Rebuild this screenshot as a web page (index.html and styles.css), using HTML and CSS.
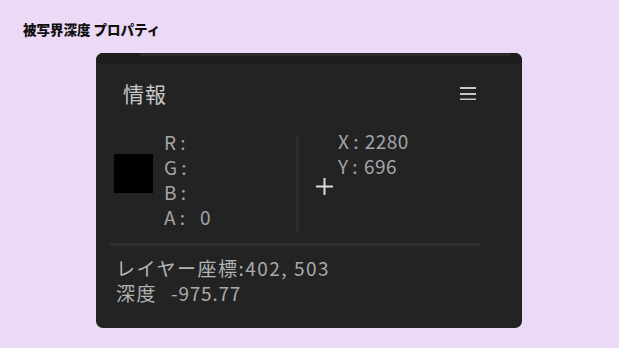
FILE: index.html
```html
<!DOCTYPE html>
<html>
  <head>
    <title>被写界深度 プロパティ</title>
    <link rel="stylesheet" href="styles.css">
  </head>
  <body>
    <h1 class="title">被写界深度 プロパティ</h1>

    <div class="panel">
      <div class="tabbar"><div class="tabstrip"></div></div>

      <div class="header">
        <span class="header-title">情報</span>
        <svg class="menu" width="16" height="14" viewBox="0 0 16 14">
          <rect x="0" y="1" width="16" height="2" fill="#c8c8c8"/>
          <rect x="0" y="7" width="16" height="2" fill="#c8c8c8"/>
          <rect x="0" y="12.5" width="16" height="1.5" fill="#c8c8c8"/>
        </svg>
      </div>

      <div class="info">
        <div class="swatch"></div>
        <ul class="rows rgba">
          <li>R :</li>
          <li>G :</li>
          <li>B :</li>
          <li>A :<span class="val">0</span></li>
        </ul>
        <div class="divider"></div>
        <svg class="cross" width="17" height="17" viewBox="0 0 17 17">
          <rect x="7.5" y="0" width="2" height="17" fill="#dcdcdc"/>
          <rect x="0" y="7.5" width="17" height="2" fill="#dcdcdc"/>
        </svg>
        <ul class="rows xy">
          <li>X : <span>2280</span></li>
          <li>Y : <span>696</span></li>
        </ul>
      </div>

      <div class="sep"></div>

      <ul class="rows footer">
        <li><span class="label">レイヤー座標:</span><span class="num">402, 503</span></li>
        <li><span class="label">深度</span><span class="num depth">-975.77</span></li>
      </ul>
    </div>
  </body>
</html>
```

FILE: styles.css
```css
body { margin: 0; background: #ecd9f6; font-family: "Noto Sans CJK JP", sans-serif; }

.title { margin: 0; padding: 21px 0 0 23px; font-size: 13.5px; line-height: 16px; font-weight: 900; color: #111; }

.panel { margin: 16px 0 0 96px; width: 426px; height: 275px; background: #232323; border-radius: 7px; overflow: hidden; }

.tabbar { height: 11px; background: #1d1d1d; }
.tabstrip { margin: 0 12px 0 44px; height: 3px; background: #2b2b2b; }

.header { display: flex; justify-content: space-between; align-items: center; height: 24px; padding: 17px 46px 23px 27px; }
.header-title { font-size: 21px; line-height: 24px; color: #c8c8c8; letter-spacing: 1px; }
.menu { display: block; }

.info { display: flex; align-items: flex-start; height: 105px; }
.swatch { width: 39px; height: 39px; background: #000; margin: 26px 0 0 18px; }

.rows { list-style: none; margin: 0; padding: 0; font-size: 19px; line-height: 25px; color: #a2a5a9; }
.rgba { width: 132px; margin-left: 11px; padding-top: 1px; }
.rgba .val { margin-left: 15px; }
.divider { width: 3px; height: 97px; margin-top: 7px; background: #2e2e2e; }
.cross { display: block; margin: 50px 0 0 17px; }
.xy { margin-left: 5px; }
.xy span { margin-left: 2px; letter-spacing: 0.5px; }

.sep { margin: 10px 0 0 14px; width: 370px; height: 3px; background: #2f2f2f; }

.footer { margin: 9px 0 0 20px; color: #b4b4b4; }
.footer .label { letter-spacing: 1.5px; }
.footer .num { color: #a8abaf; letter-spacing: 1.5px; }
.footer .depth { margin-left: 14px; letter-spacing: 0.8px; }
```
